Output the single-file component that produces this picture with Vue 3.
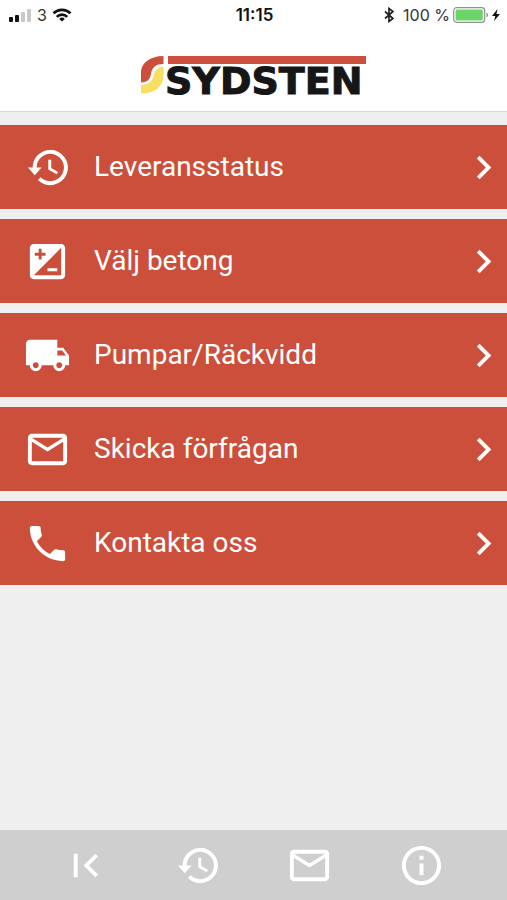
<script setup>
const icons = {
  history: 'M13.4 3a9 9 0 0 0-9 9H2l3.5 3.9L9 12H6.4a7 7 0 1 1 2.1 5l-1.4 1.4A9 9 0 1 0 13.4 3zM12.4 8v5l4.3 2.5.7-1.2-3.5-2.1V8z',
  mix: 'M19 3H5c-1.1 0-2 .9-2 2v14c0 1.1.9 2 2 2h14c1.1 0 2-.9 2-2V5c0-1.1-.9-2-2-2zM5.5 7.5h2v-2H9v2h2V9H9v2H7.5V9h-2V7.5zM19 19H5L19 5v14zm-2-2v-1.5h-5V17h5z',
  truck: 'M20 8h-3V4H3c-1.1 0-2 .9-2 2v11h2c0 1.66 1.34 3 3 3s3-1.34 3-3h6c0 1.66 1.34 3 3 3s3-1.34 3-3h2v-5l-3-4zM6 18.5c-.83 0-1.5-.67-1.5-1.5s.67-1.5 1.5-1.5 1.5.67 1.5 1.5-.67 1.5-1.5 1.5zm13.5-9l1.96 2.5H17V9.5h2.5zm-1.5 9c-.83 0-1.5-.67-1.5-1.5s.67-1.5 1.5-1.5 1.5.67 1.5 1.5-.67 1.5-1.5 1.5z',
  mail: 'M20 4H4c-1.1 0-1.99.9-1.99 2L2 18c0 1.1.9 2 2 2h16c1.1 0 2-.9 2-2V6c0-1.1-.9-2-2-2zm0 14H4V8l8 5 8-5v10zm-8-7L4 6h16l-8 5z',
  phone: 'M6.62 10.79c1.44 2.83 3.76 5.14 6.59 6.59l2.2-2.2c.27-.27.67-.36 1.02-.24 1.12.37 2.33.57 3.57.57.55 0 1 .45 1 1V20c0 .55-.45 1-1 1-9.39 0-17-7.61-17-17 0-.55.45-1 1-1h3.5c.55 0 1 .45 1 1 0 1.25.2 2.45.57 3.57.11.35.03.74-.25 1.02l-2.2 2.2z',
  first: 'M18.41 16.59L13.82 12l4.59-4.59L17 6l-6 6 6 6zM6 6h2v12H6z',
  info: 'M11 17h2v-6h-2v6zm1-15C6.48 2 2 6.48 2 12s4.48 10 10 10 10-4.48 10-10S17.52 2 12 2zm0 18c-4.41 0-8-3.59-8-8s3.59-8 8-8 8 3.59 8 8-3.59 8-8 8zM11 9h2V7h-2v2z',
  chevron: 'M10 6L8.59 7.41 13.17 12l-4.58 4.59L10 18l6-6z'
}

const menu = [
  { label: 'Leveransstatus', icon: 'history' },
  { label: 'Välj betong', icon: 'mix' },
  { label: 'Pumpar/Räckvidd', icon: 'truck' },
  { label: 'Skicka förfrågan', icon: 'mail' },
  { label: 'Kontakta oss', icon: 'phone' }
]

const tabs = ['first', 'history', 'mail', 'info']
</script>

<template>
  <div class="app">
    <header class="header">
      <div class="status">
        <div class="status-side">
          <svg class="signal" viewBox="0 0 23 13">
            <rect x="0" y="8" width="4" height="5" rx="1" fill="#111" />
            <rect x="6" y="6" width="4" height="7" rx="1" fill="#111" />
            <rect x="12" y="3" width="4" height="10" rx="1" fill="#c8c8c8" />
            <rect x="18" y="0" width="4" height="13" rx="1" fill="#c8c8c8" />
          </svg>
          <span>3</span>
          <svg class="wifi" viewBox="0 0 20 14" fill="none" stroke="#111" stroke-width="2.6">
            <path d="M1.5 5.3a12.2 12.2 0 0 1 17 0M4.8 8.8a7.4 7.4 0 0 1 10.4 0" />
            <path d="M10 13.5L7.2 10.9a4 4 0 0 1 5.6 0z" fill="#111" stroke="none" />
          </svg>
        </div>
        <span class="time">11:15</span>
        <div class="status-side end">
          <svg class="bluetooth" viewBox="0 0 10 16" fill="none" stroke="#222" stroke-width="1.7">
            <path d="M1 4.5l8 7-4 3v-13l4 3-8 7" />
          </svg>
          <span>100 %</span>
          <svg class="battery" viewBox="0 0 36 16">
            <rect x=".7" y=".7" width="31" height="14.6" rx="3" fill="#fff" stroke="#8f8f94" stroke-width="1.2" />
            <rect x="2.6" y="2.6" width="27.2" height="10.8" rx="1.5" fill="#6bd568" />
            <path d="M33.5 5.5c2 .8 2 4.2 0 5z" fill="#8f8f94" />
          </svg>
          <svg class="bolt" viewBox="0 0 8 12"><path d="M5.5 0L0 7h3.3L2 12l6-7H4.5z" fill="#111" /></svg>
        </div>
      </div>
      <div class="brand">
        <svg class="logo" viewBox="0 0 226 40" role="img" aria-label="Sydsten">
          <path d="M22.5 0C8 0 0 8 0 16v10.5c7-.5 9-3.5 10-8.5C11 11 15 8 22.5 8z" fill="#cc4f3b" />
          <path d="M22.5 10.7C15.5 11 13.5 15 12.5 20 11 26.5 6 29 0 29v8.5c14 0 22.5-7 22.5-18z" fill="#f6df63" />
          <path d="M27 0h198v8H27z" fill="#cc4f3b" />
          <text class="wordmark" x="24" y="38">SYDSTEN</text>
        </svg>
      </div>
    </header>

    <nav class="menu">
      <a v-for="item in menu" :key="item.label" class="row" href="#">
        <svg class="icon" viewBox="0 0 24 24"><path :d="icons[item.icon]" /></svg>
        <span class="label">{{ item.label }}</span>
        <svg class="icon" viewBox="0 0 24 24"><path :d="icons.chevron" /></svg>
      </a>
    </nav>

    <footer class="tabs">
      <button v-for="tab in tabs" :key="tab" class="tab" type="button">
        <svg class="icon" viewBox="0 0 24 24"><path :d="icons[tab]" /></svg>
      </button>
    </footer>
  </div>
</template>

<style>
body {
  background: #efefef;
}
</style>

<style scoped>
.app {
  display: flex;
  flex-direction: column;
  min-height: 100vh;
  font-family: Roboto, "Liberation Sans", sans-serif;
}
.header {
  background: #fff;
  border-bottom: 1px solid #d9d9d9;
}
.status {
  display: flex;
  align-items: center;
  height: 30px;
  padding: 0 7px 0 9px;
  font: 400 16px/30px Inter, sans-serif;
  color: #333;
}
.status-side {
  display: flex;
  flex: 1;
  align-items: center;
  gap: 5px;
}
.end {
  justify-content: flex-end;
  gap: 3px;
}
.time {
  font-size: 17px;
  font-weight: 600;
  color: #111;
}
.signal {
  width: 23px;
  height: 13px;
}
.wifi {
  width: 20px;
  height: 14px;
}
.bluetooth {
  width: 10px;
  height: 16px;
  margin-right: 6px;
}
.battery {
  width: 36px;
  height: 16px;
}
.bolt {
  width: 8px;
  height: 12px;
}
.brand {
  display: flex;
  justify-content: center;
  padding: 26px 0 15px;
}
.logo {
  width: 226px;
  height: 40px;
  overflow: visible;
}
.wordmark {
  font: 700 38px "DejaVu Sans", sans-serif;
  fill: #161616;
  stroke: #161616;
  stroke-width: 1px;
}
.menu {
  display: flex;
  flex: 1;
  flex-direction: column;
  gap: 10px;
  padding: 13px 0;
}
.row {
  display: flex;
  align-items: center;
  height: 84px;
  padding-left: 24px;
  background: #cc4f3b;
  color: #fff;
  text-decoration: none;
}
.icon {
  flex: none;
  width: 47px;
  height: 47px;
  fill: #fff;
}
.label {
  flex: 1;
  padding-left: 23px;
  font-size: 28px;
  line-height: 36px;
}
.tabs {
  display: flex;
  height: 70px;
  padding: 0 29px;
  background: #cfcfcf;
}
.tab {
  display: flex;
  flex: 1;
  align-items: center;
  justify-content: center;
  padding: 0;
  border: 0;
  background: none;
}
</style>
